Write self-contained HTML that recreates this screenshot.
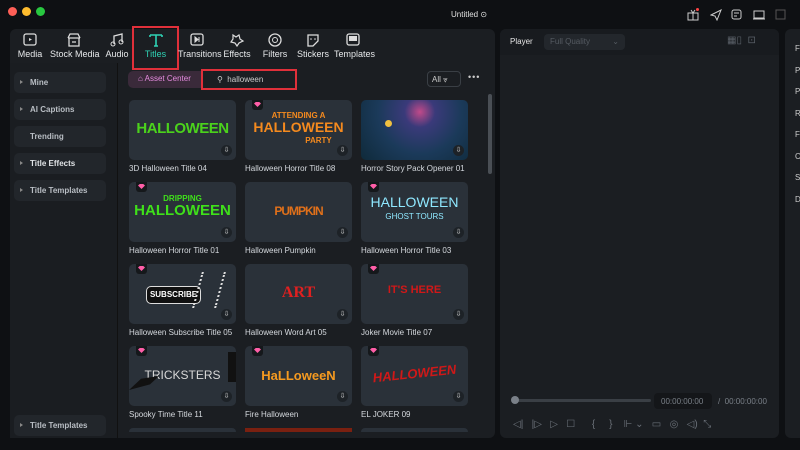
<!DOCTYPE html>
<html><head><meta charset="utf-8"><style>
*{margin:0;padding:0;box-sizing:border-box}
body{width:800px;height:450px;overflow:hidden;background:#0e1013;font-family:"Liberation Sans",sans-serif;color:#cfd3d8;position:relative}
.a{position:absolute}
.dot{width:9px;height:9px;border-radius:50%;top:7px}
.tab{top:33px;height:30px;text-align:center;font-size:9px;color:#e6e8ea;white-space:nowrap}
.tab svg{display:block;margin:0 auto 2px}
.side{left:14px;width:92px;height:21px;background:#22262b;border-radius:5px;font-size:8px;font-weight:bold;color:#b9bec4;padding:6px 0 0 16px}
.side i{position:absolute;left:6px;top:8px;border-left:3px solid #888;border-top:2.5px solid transparent;border-bottom:2.5px solid transparent}
.card{width:107px;height:60px;background:#2a3139;border-radius:5px;overflow:hidden}
.lbl{font-size:8px;color:#d5d9de;white-space:nowrap}
.dl{position:absolute;right:4px;bottom:4px;width:11px;height:11px;border-radius:50%;background:#1d2227;color:#ddd;font-size:7px;text-align:center;line-height:11px}
.gem{position:absolute;left:7px;top:0;width:11px;height:10px;background:#15181b;border-radius:0 0 3px 3px}
.gem:after{content:"";position:absolute;left:2px;top:2px;width:7px;height:5px;background:#ff5ea8;clip-path:polygon(0 30%,25% 0,75% 0,100% 30%,50% 100%)}
.t{position:absolute;left:0;right:0;text-align:center;font-weight:bold;font-family:"Liberation Sans",sans-serif;white-space:nowrap}
.ctl{font-size:10px;color:#6a7078;white-space:nowrap}
.ic{position:absolute;top:9px}
</style></head><body>
<div class="a dot" style="left:8px;background:#fe5f57"></div>
<div class="a dot" style="left:22px;background:#febc2e"></div>
<div class="a dot" style="left:36px;background:#28c840"></div>
<div class="a" style="left:451px;top:10px;font-size:8px;color:#e0e0e0;white-space:nowrap">Untitled ⊙</div>
<svg class="ic" style="left:687px" width="12" height="12"><rect x="1" y="4" width="10" height="7" fill="none" stroke="#ccc"/><path d="M1 4h10M6 4v7M4 1l2 3 2-3" fill="none" stroke="#ccc"/></svg>
<div class="a" style="left:696px;top:8px;width:3px;height:3px;border-radius:50%;background:#f44"></div>
<svg class="ic" style="left:710px" width="12" height="12"><path d="M1 6l10-5-4 10-2-4z" fill="none" stroke="#ccc"/></svg>
<svg class="ic" style="left:731px" width="12" height="12"><rect x="1" y="1" width="9" height="9" rx="2" fill="none" stroke="#ccc"/><path d="M3 4h5M3 7h3" stroke="#ccc"/></svg>
<svg class="ic" style="left:753px" width="12" height="12"><rect x="1" y="2" width="10" height="7" fill="none" stroke="#ccc"/><path d="M0 10h12" stroke="#ccc"/></svg>
<svg class="ic" style="left:775px" width="12" height="12"><rect x="1" y="1" width="9" height="9" fill="none" stroke="#555"/></svg>

<!-- left panel -->
<div class="a" style="left:10px;top:29px;width:485px;height:409px;background:#1b1e22;border-radius:6px"></div>
<div class="a" style="left:10px;top:63px;width:108px;height:375px;background:#1a1d21;border-right:1px solid #111"></div>
<div class="a tab" style="left:14px;width:32px"><svg width="16" height="14"><rect x="2" y="1" width="12" height="11" rx="2" fill="none" stroke="#ddd" stroke-width="1.3"/><path d="M7 5l3 1.5-3 1.5z" fill="#ddd"/></svg>Media</div>
<div class="a tab" style="left:50px;width:48px"><svg width="16" height="14"><path d="M2 5h12M3 5v8h10V5M2 5l2-4h8l2 4M6 9h4" fill="none" stroke="#ddd" stroke-width="1.3"/></svg>Stock Media</div>
<div class="a tab" style="left:104px;width:26px"><svg width="16" height="14"><path d="M5 11V3l8-2v8" fill="none" stroke="#ddd" stroke-width="1.3"/><circle cx="4" cy="11" r="2" fill="none" stroke="#ddd"/><circle cx="12" cy="9" r="2" fill="none" stroke="#ddd"/></svg>Audio</div>
<div class="a" style="left:132px;top:26px;width:47px;height:44px;border:2px solid #e0303a"></div>
<div class="a tab" style="left:134px;width:43px;color:#2fd3b5"><svg width="16" height="14"><path d="M2 2h12M8 2v11M2 2v2M14 2v2M6 13h4" fill="none" stroke="#2fd3b5" stroke-width="1.6"/></svg>Titles</div>
<div class="a tab" style="left:178px;width:38px"><svg width="16" height="14"><rect x="2" y="1" width="12" height="11" rx="2" fill="none" stroke="#ddd" stroke-width="1.3"/><path d="M6 4v5l3-2.5zM10 4v5" fill="#ddd" stroke="#ddd"/></svg>Transitions</div>
<div class="a tab" style="left:222px;width:30px"><svg width="16" height="14"><path d="M4 2l3 2 3-2 1 4 3 2-4 2-2 3-2-3-4-1 2-3z" fill="none" stroke="#ddd" stroke-width="1.2"/></svg>Effects</div>
<div class="a tab" style="left:260px;width:30px"><svg width="16" height="14"><circle cx="8" cy="7" r="6" fill="none" stroke="#ddd" stroke-width="1.3"/><circle cx="8" cy="7" r="2.5" fill="none" stroke="#ddd"/></svg>Filters</div>
<div class="a tab" style="left:296px;width:34px"><svg width="16" height="14"><path d="M3 2h10v6l-5 5H3z" fill="none" stroke="#ddd" stroke-width="1.3"/><circle cx="6" cy="6" r=".8" fill="#ddd"/><circle cx="10" cy="6" r=".8" fill="#ddd"/></svg>Stickers</div>
<div class="a tab" style="left:334px;width:38px"><svg width="16" height="14"><rect x="2" y="1" width="12" height="11" rx="2" fill="none" stroke="#ddd" stroke-width="1.3"/><rect x="4" y="3" width="8" height="5" fill="#ddd"/></svg>Templates</div>

<div class="a side" style="top:72px"><i></i>Mine</div>
<div class="a side" style="top:99px"><i></i>AI Captions</div>
<div class="a side" style="top:126px">Trending</div>
<div class="a side" style="top:153px;color:#e0e3e6"><i></i>Title Effects</div>
<div class="a side" style="top:180px"><i></i>Title Templates</div>
<div class="a side" style="top:415px"><i></i>Title Templates</div>

<div class="a" style="left:128px;top:71px;width:78px;height:17px;background:#3a2a3a;border-radius:5px;font-size:8px;color:#e68ce0;padding:3px 0 0 10px;white-space:nowrap">⌂ Asset Center</div>
<div class="a" style="left:201px;top:69px;width:96px;height:21px;border:2px solid #e0303a;font-size:8px;color:#ccc;padding:4px 0 0 14px;background:#1b1e22;white-space:nowrap">⚲ &nbsp;halloween</div>
<div class="a" style="left:427px;top:71px;width:34px;height:16px;border:1px solid #3a3f45;border-radius:4px;font-size:8px;color:#ccc;padding:3px 0 0 4px">All ⩔</div>
<div class="a" style="left:468px;top:72px;font-size:9px;color:#ccc;letter-spacing:1px">•••</div>
<div class="a" style="left:488px;top:94px;width:4px;height:80px;background:#4a4f55;border-radius:2px"></div>

<!-- row1 -->
<div class="a card" style="left:129px;top:100px"><div class="t" style="top:20px;color:#4bd21c;font-size:15px;letter-spacing:-.5px">HALLOWEEN</div><div class="dl">⇩</div></div>
<div class="a card" style="left:245px;top:100px"><div class="gem"></div><div class="t" style="top:11px;color:#f58a1e;font-size:8px">ATTENDING A</div><div class="t" style="top:19px;color:#f58a1e;font-size:14px">HALLOWEEN</div><div class="t" style="top:36px;color:#f58a1e;font-size:8px;left:40px">PARTY</div><div class="dl">⇩</div></div>
<div class="a card" style="left:361px;top:100px;background:radial-gradient(circle at 55% 20%,#c04a8a 0,#3a3a7a 20%,#1b3a5a 55%,#0f2a3a 100%)"><div style="position:absolute;left:24px;top:20px;width:7px;height:7px;border-radius:50%;background:#f0c040"></div><div class="dl">⇩</div></div>
<div class="a lbl" style="left:129px;top:164px">3D Halloween Title 04</div>
<div class="a lbl" style="left:245px;top:164px">Halloween Horror Title 08</div>
<div class="a lbl" style="left:361px;top:164px">Horror Story Pack Opener 01</div>
<!-- row2 -->
<div class="a card" style="left:129px;top:182px"><div class="gem"></div><div class="t" style="top:12px;color:#3fe01a;font-size:8px">DRIPPING</div><div class="t" style="top:20px;color:#3fe01a;font-size:15px">HALLOWEEN</div><div class="dl">⇩</div></div>
<div class="a card" style="left:245px;top:182px"><div class="t" style="top:22px;color:#e0701a;font-size:12px;letter-spacing:-1px">PUMPKIN</div><div class="dl">⇩</div></div>
<div class="a card" style="left:361px;top:182px"><div class="gem"></div><div class="t" style="top:12px;color:#8fe8ff;font-size:14px;font-weight:normal">HALLOWEEN</div><div class="t" style="top:30px;color:#8fe8ff;font-size:8px;font-weight:normal">GHOST TOURS</div><div class="dl">⇩</div></div>
<div class="a lbl" style="left:129px;top:246px">Halloween Horror Title 01</div>
<div class="a lbl" style="left:245px;top:246px">Halloween Pumpkin</div>
<div class="a lbl" style="left:361px;top:246px">Halloween Horror Title 03</div>
<!-- row3 -->
<div class="a card" style="left:129px;top:264px"><div class="gem"></div><div style="position:absolute;left:17px;top:22px;width:55px;height:18px;background:#111;border:1px solid #ddd;border-radius:5px;color:#fff;font-size:8px;font-weight:bold;text-align:center;line-height:16px">SUBSCRIBE</div><div style="position:absolute;left:68px;top:8px;width:24px;height:36px;border-left:2px dotted #ddd;border-right:2px dotted #ddd;transform:skewX(-15deg)"></div><div class="dl">⇩</div></div>
<div class="a card" style="left:245px;top:264px"><div class="t" style="top:20px;color:#e02020;font-size:16px;font-family:'Liberation Serif',serif">ART</div><div class="dl">⇩</div></div>
<div class="a card" style="left:361px;top:264px"><div class="gem"></div><div class="t" style="top:20px;color:#d01818;font-size:11px">IT'S HERE</div><div class="dl">⇩</div></div>
<div class="a lbl" style="left:129px;top:328px">Halloween Subscribe Title 05</div>
<div class="a lbl" style="left:245px;top:328px">Halloween Word Art 05</div>
<div class="a lbl" style="left:361px;top:328px">Joker Movie Title 07</div>
<!-- row4 -->
<div class="a card" style="left:129px;top:346px"><div class="gem"></div><div class="t" style="top:22px;color:#d8d8d8;font-size:12px;font-weight:normal">TRICKSTERS</div><div style="position:absolute;left:0;top:30px;width:30px;height:14px;background:#111;clip-path:polygon(0 100%,40% 20%,100% 0,70% 60%)"></div><div style="position:absolute;right:0;top:6px;width:8px;height:30px;background:#111"></div><div class="dl">⇩</div></div>
<div class="a card" style="left:245px;top:346px"><div class="gem"></div><div class="t" style="top:22px;color:#f59a20;font-size:13px">HaLLoweeN</div><div class="dl">⇩</div></div>
<div class="a card" style="left:361px;top:346px"><div class="gem"></div><div class="t" style="top:20px;color:#d01818;font-size:13px;font-style:italic;transform:rotate(-6deg)">HALLOWEEN</div><div class="dl">⇩</div></div>
<div class="a lbl" style="left:129px;top:410px">Spooky Time Title 11</div>
<div class="a lbl" style="left:245px;top:410px">Fire Halloween</div>
<div class="a lbl" style="left:361px;top:410px">EL JOKER 09</div>
<!-- row5 partial -->
<div class="a" style="left:129px;top:428px;width:107px;height:4px;background:#2a3139;border-radius:4px 4px 0 0"></div>
<div class="a" style="left:245px;top:428px;width:107px;height:4px;background:#7a2010"></div>
<div class="a" style="left:361px;top:428px;width:107px;height:4px;background:#2a3139;border-radius:4px 4px 0 0"></div>

<!-- player -->
<div class="a" style="left:500px;top:29px;width:279px;height:409px;background:#1b1e22;border-radius:6px"></div>
<div class="a" style="left:500px;top:29px;width:279px;height:26px;background:#181b1f;border-radius:6px 6px 0 0"></div>
<div class="a" style="left:510px;top:37px;font-size:8px;color:#e6e6e6">Player</div>
<div class="a" style="left:544px;top:34px;width:81px;height:16px;background:#23272c;border-radius:4px;font-size:8px;color:#555b62;padding:3px 0 0 6px;white-space:nowrap">Full Quality <span style="margin-left:20px">⌄</span></div>
<div class="a" style="left:727px;top:35px;font-size:10px;color:#5a6068;white-space:nowrap">▦▯ &nbsp;⊡</div>
<div class="a" style="left:515px;top:399px;width:136px;height:3px;background:#3a3f45;border-radius:2px"></div>
<div class="a" style="left:511px;top:396px;width:8px;height:8px;border-radius:50%;background:#7a8088"></div>
<div class="a" style="left:654px;top:393px;width:58px;height:16px;background:#141619;border-radius:4px;font-size:8px;color:#7a8088;padding:4px 0 0 7px">00:00:00:00</div>
<div class="a" style="left:718px;top:397px;font-size:8px;color:#7a8088;white-space:nowrap">/ &nbsp;00:00:00:00</div>
<div class="a ctl" style="left:513px;top:419px">◁| &nbsp; |▷ &nbsp; ▷ &nbsp;&nbsp;☐ &nbsp;&nbsp;&nbsp;&nbsp; { &nbsp;&nbsp;&nbsp; } &nbsp;&nbsp; ⊩ ⌄ &nbsp; ▭ &nbsp; ◎ &nbsp; ◁) &nbsp;⤡</div>

<!-- right panel -->
<div class="a" style="left:785px;top:29px;width:20px;height:409px;background:#1b1e22;border-radius:6px 0 0 6px"></div>
<div class="a" style="left:795px;top:38px;font-size:8px;color:#ccc;line-height:21.5px">F<br>P<br>P<br>R<br>F<br>C<br>S<br>D</div>
</body></html>
